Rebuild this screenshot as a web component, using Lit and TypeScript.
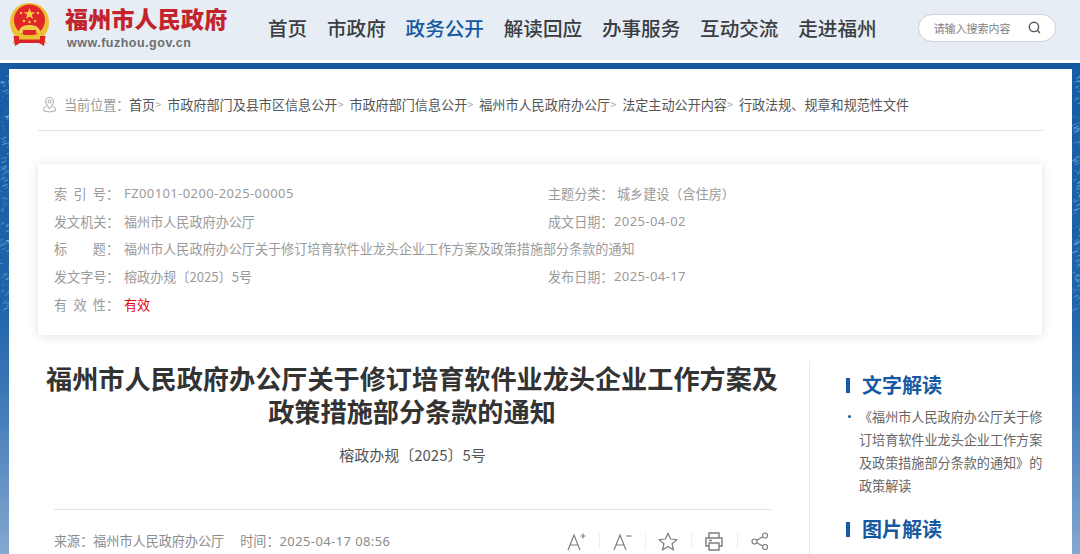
import { LitElement, html, css, svg } from "lit";
import { customElement } from "lit/decorators.js";

const NAV = ["首页", "市政府", "政务公开", "解读回应", "办事服务", "互动交流", "走进福州"];
const CRUMBS = ["市政府部门及县市区信息公开", "市政府部门信息公开", "福州市人民政府办公厅", "法定主动公开内容"];

function streaks(w: number, seed: number) {
  const out = [];
  let s = seed;
  const r = () => ((s = (s * 9301 + 49297) % 233280) / 233280);
  for (let i = 0; i < 110; i++) {
    const y = 5 + r() * 240;
    const x = r() * w;
    const l = 1 + r() * 5;
    const o = 0.12 + r() * 0.5;
    out.push(svg`<line x1=${x} y1=${y} x2=${x + l} y2=${y - l * 0.4} stroke="#a8dcf0" stroke-opacity=${o} stroke-width="1"/>`);
  }
  return out;
}

@customElement("app-root")
export class AppRoot extends LitElement {
  static styles = css`
    :host { display: block; width: 1080px; height: 554px; overflow: hidden;
      font-family: "Noto Sans CJK SC", "Noto Sans", sans-serif; }
    .header { height: 60px; background: #e6edf5; display: flex; align-items: center; box-sizing: border-box; padding-left: 9px; }
    .emblem { width: 41px; height: 43px; flex: none; margin-top: -12px; }
    .brand { margin-left: 15px; width: 203px; flex: none; display: flex; flex-direction: column; margin-top: -3px; }
    .brand-name { font-size: 23px; line-height: 26px; font-weight: 900; color: #c3242c; white-space: nowrap; letter-spacing: 0.2px; font-family: "Liberation Serif", "Noto Sans CJK SC", serif; }
    .brand-url { font-family: "Liberation Sans", sans-serif; font-size: 12.5px; line-height: 14px; font-weight: 700; color: #6d6f73; letter-spacing: 0.5px; margin: 2px 0 0 2px; }
    .nav { display: flex; gap: 19.800px; margin-top: -4px; }
    .nav a { font-size: 19.6px; font-weight: 500; color: #3a3d42; white-space: nowrap; line-height: 28px; }
    .nav a.on { color: #1559a3; }
    .search { margin: -5px 0 0 41px; width: 138px; height: 28px; box-sizing: border-box; border: 1px solid #cfd2d6; border-radius: 14px; background: #fff;
      display: flex; align-items: center; justify-content: space-between; padding: 0 14px 0 15px; font-size: 11px; color: #808285; }
    .search svg { width: 13px; height: 13px; }
    .bluebar { height: 9px; box-sizing: border-box; border-bottom: 6px solid #1559a3; display: flex; padding: 0 8px 0 9px; }
    .bluebar i { flex: 1; background: #fff; height: 3px; }
    .stage { display: flex; height: 485px; background: linear-gradient(#175ca6 0%, #1f63aa 48%, #3b76b5 66%, #84a8d0 100%); }
    .side { flex: none; width: 9px; overflow: hidden; }
    .side.r { width: 8px; }
    .side svg { display: block; width: 100%; height: 250px; }
    .panel { flex: 1; min-width: 0; background: #fff; box-sizing: border-box; padding: 0 29px; display: flex; flex-direction: column; }
    .crumbs { display: flex; align-items: center; height: 62px; border-bottom: 1px solid #e4e4e4; font-size: 13.1px; color: #555; white-space: nowrap; box-sizing: border-box; padding: 10px 0 0 4px; flex: none; }
    .crumbs span { margin-top: -1px; }
    .crumbs svg { width: 15px; height: 17px; margin-right: 7px; flex: none; }
    .crumbs .here { color: #9b9b9b; width: 65px; flex: none; }
    .crumbs .sep { color: #aaa; font-size: 11px; margin-right: 1.5px; width: 10.5px; }
    .card { margin-top: 33px; height: 171px; width: 1004px; flex: none; box-sizing: border-box; padding: 15.500px 16px; box-shadow: 0 1px 10px rgba(0,0,0,.12); background: #fff;
      display: grid; grid-template-columns: 494px 1fr; grid-auto-rows: 27.7px; font-size: 13.1px; color: #9a9a9a; }
    .row { display: flex; align-items: center; white-space: nowrap; }
    .row.full { grid-column: 1 / 3; }
    .lab { width: 70px; flex: none; }
    .lab.j { width: 65px; margin-right: 5px; display: flex; justify-content: space-between; }
    .row.rt .lab { width: 66px; }
    .n { font-family: "Noto Sans", sans-serif; font-size: 13px; letter-spacing: 0.4px; }
    .red { color: #e8000f; }
    .body { display: flex; flex: 1; min-height: 0; margin-top: 26px; }
    .main { width: 772px; flex: none; box-sizing: border-box; border-right: 1px solid #eaeaea; padding-right: 23px; }
    .title { margin: 0; font-size: 26.15px; line-height: 33px; font-weight: 700; color: #333; text-align: center; padding-top: 1px; }
    .doc { text-align: center; font-size: 15px; line-height: 20px; color: #555; margin: 17px 0 0 1px; }
    .meta { margin: 44px 15px 0 16px; border-top: 1px solid #e4e4e4; display: flex; align-items: center; height: 62px; font-size: 13.1px; color: #8c8c8c; white-space: nowrap; box-sizing: border-box; }
    .meta .t { margin-left: 16px; }
    .tools { margin-left: auto; display: flex; align-items: center; gap: 11.5px; color: #7d7d7d; }
    .tools svg { width: 22px; height: 22px; display: block; }
    .tools b { width: 1px; height: 16px; background: #eee; }
    .aside { flex: 1; padding: 12px 0 0 36px; }
    .h { display: flex; align-items: center; gap: 12px; font-size: 20px; line-height: 24px; font-weight: 700; color: #1559a3; }
    .h::before { content: ""; width: 4px; height: 15px; background: #1559a3; }
    .item { position: relative; margin: 8px -1px 0 13px; font-size: 13.1px; line-height: 23px; color: #666; width: 184px; }
    .item::before { content: ""; position: absolute; left: -11px; top: 10px; width: 3px; height: 3px; border-radius: 50%; background: #1559a3; }
    .h.two { margin-top: 20px; }
    .gap { margin-left: 3px; }
  `;

  render() {
    return html`
      <div class="header">
        <svg class="emblem" viewBox="0 0 41 43">
          <path d="M20.500 0C9 0 1 8 1 19c0 6 2 10.500 5 14l-2.500 8 7-2.500h20l7 2.500-2.500-8c3-3.500 5-8 5-14C40 8 32 0 20.500 0z" fill="#ecc033"/>
          <circle cx="20.500" cy="17" r="15.500" fill="#e3262a"/>
          <path d="M20.500 5l1.500 4.200h4.300l-3.500 2.600 1.300 4.200-3.600-2.600-3.600 2.600 1.300-4.200-3.500-2.600H19z" fill="#f4d03f"/>
          <g fill="#f4d03f"><circle cx="12" cy="10" r="1.200"/><circle cx="29" cy="10" r="1.200"/><circle cx="15" cy="18" r="1.200"/><circle cx="26" cy="18" r="1.200"/><circle cx="20.500" cy="19" r="1.200"/></g>
          <path d="M9 30c2-6 5-8 11.500-8s9.500 2 11.500 8z" fill="#f0cb4a"/>
          <path d="M14 27h13v3H14z" fill="#e3262a"/>
          <path d="M4.500 33h32l-1.500 10-5-3H11l-5 3z" fill="#d9262b"/>
          <path d="M10 32h21v4.500H10z" fill="#ecc033"/>
        </svg>
        <div class="brand">
          <div class="brand-name">福州市人民政府</div>
          <div class="brand-url">www.fuzhou.gov.cn</div>
        </div>
        <nav class="nav">
          ${NAV.map((n) => html`<a class=${n === "政务公开" ? "on" : ""}>${n}</a>`)}
        </nav>
        <div class="search">
          <span>请输入搜索内容</span>
          <svg viewBox="0 0 12 12" fill="none" stroke="#555" stroke-width="1.300"><circle cx="5.500" cy="5.500" r="4.300"/><path d="M8.800 8.800l2.200 2.200"/></svg>
        </div>
      </div>
      <div class="bluebar"><i></i></div>
      <div class="stage">
        <div class="side"><svg viewBox="0 0 9 250">${streaks(9, 17)}</svg></div>
        <div class="panel">
          <div class="crumbs">
            <svg viewBox="0 0 15 17" fill="none" stroke="#b5b5b5" stroke-width="1.100">
              <path d="M7.500 12.500C5 9.500 3.500 7.800 3.500 5.500a4 4 0 0 1 8 0c0 2.300-1.500 4-4 7z"/><circle cx="7.500" cy="5.500" r="1.500"/>
              <path d="M4.500 10.500C2.300 11.200 1 12.500 1.500 14c.4 1.200 2.500 1.700 6 1.700s5.600-.5 6-1.700c.5-1.500-.8-2.800-3-3.500"/>
            </svg>
            <span class="here">当前位置：</span>
            <span>首页</span><span class="sep">&gt;</span>
            ${CRUMBS.map((c) => html`<span>${c}</span><span class="sep">&gt;</span>`)}
            <span>行政法规、规章和规范性文件</span>
          </div>
          <div class="card">
            <div class="row"><span class="lab j"><span>索</span><span>引</span><span>号：</span></span><span class="n">FZ00101-0200-2025-00005</span></div>
            <div class="row rt"><span class="lab">主题分类：</span><span class="gap">城乡建设（含住房）</span></div>
            <div class="row"><span class="lab">发文机关：</span>福州市人民政府办公厅</div>
            <div class="row rt"><span class="lab">成文日期：</span><span class="n">2025-04-02</span></div>
            <div class="row full"><span class="lab j"><span>标</span><span>题：</span></span>福州市人民政府办公厅关于修订培育软件业龙头企业工作方案及政策措施部分条款的通知</div>
            <div class="row"><span class="lab">发文字号：</span>榕政办规〔2025〕5号</div>
            <div class="row rt"><span class="lab">发布日期：</span><span class="n">2025-04-17</span></div>
            <div class="row full"><span class="lab j"><span>有</span><span>效</span><span>性：</span></span><span class="red">有效</span></div>
          </div>
          <div class="body">
            <div class="main">
              <h1 class="title">福州市人民政府办公厅关于修订培育软件业龙头企业工作方案及政策措施部分条款的通知</h1>
              <div class="doc">榕政办规〔2025〕5号</div>
              <div class="meta">
                <span>来源：福州市人民政府办公厅</span><span class="t">时间：<span class="n">2025-04-17 08:56</span></span>
                <div class="tools">
                  <svg viewBox="0 0 22 22" fill="none" stroke="currentColor" stroke-width="1.200"><path d="M3 20L9 5l6 15M5.300 15h7.400"/><path d="M15.500 6h5M18 3.500v5"/></svg><b></b>
                  <svg viewBox="0 0 22 22" fill="none" stroke="currentColor" stroke-width="1.200"><path d="M3 20L9 5l6 15M5.300 15h7.400"/><path d="M15.500 6h5"/></svg><b></b>
                  <svg viewBox="0 0 22 22" fill="none" stroke="currentColor" stroke-width="1.200"><path d="M11 3l2.500 6 6.500.5-5 4.200 1.600 6.300L11 16.600 5.400 20 7 13.700 2 9.500 8.500 9z" stroke-linejoin="round"/></svg><b></b>
                  <svg viewBox="0 0 22 22" fill="none" stroke="currentColor" stroke-width="1.400"><path d="M6 8V3h10v5M6 16H3V8h16v8h-3"/><path d="M6 13h10v7H6zM6 10.500h3"/></svg><b></b>
                  <svg viewBox="0 0 22 22" fill="none" stroke="currentColor" stroke-width="1.200"><circle cx="5.500" cy="11.500" r="2.500"/><circle cx="16" cy="5.500" r="2.500"/><circle cx="16" cy="17" r="2.500"/><path d="M7.700 10.300l6.100-3.600M7.700 12.700l6.100 3.300"/></svg>
                </div>
              </div>
            </div>
            <div class="aside">
              <div class="h">文字解读</div>
              <div class="item">《福州市人民政府办公厅关于修订培育软件业龙头企业工作方案及政策措施部分条款的通知》的政策解读</div>
              <div class="h two">图片解读</div>
            </div>
          </div>
        </div>
        <div class="side r"><svg viewBox="0 0 8 250">${streaks(8, 91)}</svg></div>
      </div>
    `;
  }
}
